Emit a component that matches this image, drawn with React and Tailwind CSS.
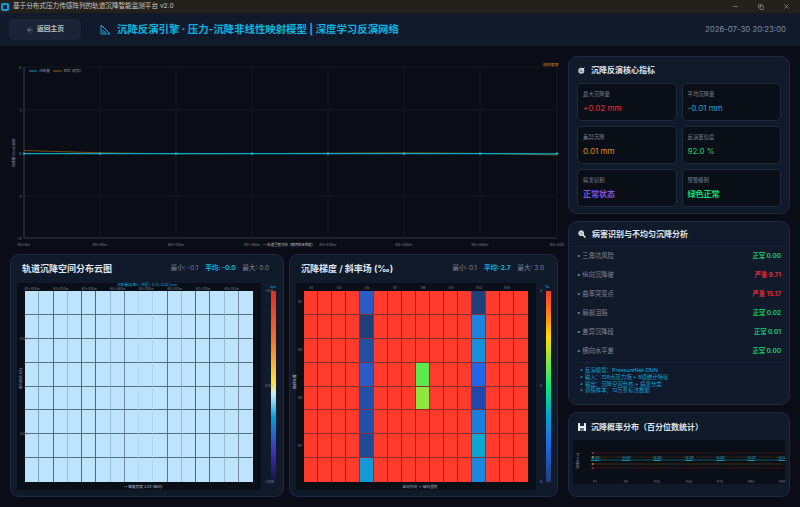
import { Minus, X, ArrowLeft, Copy } from "lucide-react";

const metrics = [
  { label: "最大沉降量", value: "+0.02 mm", color: "text-[#e5303a]" },
  { label: "平均沉降量", value: "-0.01 mm", color: "text-[#0aa5dc]" },
  { label: "差异沉降", value: "0.01 mm", color: "text-[#e08a0a]" },
  { label: "反演置信度", value: "92.0 %", color: "text-[#10d07a]" },
  { label: "病害识别", value: "正常状态", color: "text-[#8052e6] font-bold" },
  { label: "预警级别", value: "绿色正常", color: "text-[#10e07a] font-bold" },
];

const risks = [
  { name: "三角坑风险", value: "正常 0.00", color: "text-[#10c86e]" },
  { name: "纵向沉降坡", value: "严重 9.71", color: "text-[#d8303a]" },
  { name: "曲率突变点", value: "严重 15.17", color: "text-[#d8303a]" },
  { name: "局部沮陷", value: "正常 0.02", color: "text-[#10c86e]" },
  { name: "差异沉降段", value: "正常 0.01", color: "text-[#10c86e]" },
  { name: "横向水平差", value: "正常 0.00", color: "text-[#10c86e]" },
];

const notes = [
  "反演模型：PressureNet-DNN",
  "输入：128点压力场 + 8项统计特征",
  "输出：沉降空间分布 + 病害分类",
  "训练样本：12万条标注数据",
];

// vertical line strength of the cloud map, one per column
const cloudLines = [
  "border-[#7d9db3]", "border-[#4f6a7e]", "border-[#97bcd3]", "border-[#4f6a7e]",
  "border-[#4f6a7e]", "border-[#97bcd3]", "border-[#6d8ca2]", "border-[#b0d6ee]",
  "border-[#b0d6ee]", "border-[#5a788d]", "border-[#97bcd3]", "border-[#4f6a7e]",
  "border-[#4f6a7e]", "border-[#97bcd3]", "border-[#6d8ca2]", "border-transparent",
];

const col5 = ["bg-[#2a5cc8]", "bg-[#1f3f78]", "bg-[#2150a0]", "bg-[#2a5cc8]", "bg-[#2150a8]", "bg-[#2150a8]", "bg-[#1f4a96]", "bg-[#129ad8]"];
const col13 = ["bg-[#1f3f78]", "bg-[#1a84e0]", "bg-[#1690dd]", "bg-[#2068e8]", "bg-[#2048a8]", "bg-[#1a80e0]", "bg-[#08a8d0]", "bg-[#1a88e0]"];

function slopeColor(row, col) {
  if (col === 4) return col5[row];
  if (col === 12) return col13[row];
  if (col === 8 && row === 3) return "bg-[#5ee850]";
  if (col === 8 && row === 4) return "bg-[#8fe63c]";
  return "bg-[#ff3b2e]";
}

const cells = Array.from({ length: 128 }, (_, i) => ({ row: Math.floor(i / 16), col: i % 16 }));

function Panel({ className, children }) {
  return <div className={`rounded-[9px] border border-[#1d2a40] bg-[#111a2b] ${className}`}>{children}</div>;
}

function WindowIcon() {
  return <div className="ml-[1px] mr-[4px] h-[8px] w-[8px] rounded-[2px] border-2 border-[#0a9be8] bg-[#14202c]" />;
}

function RulerIcon() {
  return (
    <svg width="11" height="11" viewBox="0 0 11 11" fill="none" stroke="#0aa8e0" strokeWidth="1">
      <path d="M1 1 L10 10 L1 10 Z" />
      <path d="M3 6 L5.5 8.5 L3 8.5 Z" strokeWidth="0.7" />
    </svg>
  );
}

function TargetIcon() {
  return (
    <svg width="7" height="7" viewBox="0 0 7 7">
      <circle cx="3.3" cy="3.8" r="3" fill="#c8ced8" />
      <circle cx="3.3" cy="3.8" r="1.6" fill="#7d8798" />
      <path d="M3.3 3.8 L6.5 0.6" stroke="#e8ecf2" strokeWidth="1" />
    </svg>
  );
}

function SearchIcon() {
  return (
    <svg width="8" height="8" viewBox="0 0 8 8" fill="none">
      <circle cx="3.2" cy="3.2" r="2.4" fill="#aeb8c6" stroke="#f0f3f7" strokeWidth="1" />
      <path d="M5 5 L7.4 7.4" stroke="#f0f3f7" strokeWidth="1.4" />
    </svg>
  );
}

function SaveIcon() {
  return (
    <svg width="8" height="8" viewBox="0 0 8 8">
      <rect width="8" height="8" rx="0.6" fill="#e8ecf2" />
      <rect x="2" y="0" width="4" height="3" fill="#1c2636" />
      <rect x="2" y="5" width="4" height="3" fill="#6a7484" />
    </svg>
  );
}

function TopChart() {
  const xs = [24, 100, 176, 252, 328, 404, 480, 557];
  const xLabels = ["K0+0m", "K0+60m", "K0+120m", "K0+180m", "K0+240m", "K0+300m", "K0+360m", "K0+420"];
  const ys = [
    [67, "2"],
    [110, "1"],
    [153, "0"],
    [196, "-1"],
    [238, "-2"],
  ];
  return (
    <svg className="block" width="568" height="204" viewBox="0 46 568 204" fontFamily="Inter, 'Noto Sans CJK SC', sans-serif">
      {ys.map(([y, t]) => (
        <g key={t}>
          <line x1="24" x2="557" y1={y} y2={y} stroke="#151c2a" strokeWidth="0.7" />
          <text x="21.5" y={y + 1.5} fontSize="4" fill="#7d8798" textAnchor="end">{t}</text>
        </g>
      ))}
      {xs.map((x, i) => (
        <g key={x}>
          <line x1={x} x2={x} y1="67" y2="238" stroke="#151c2a" strokeWidth="0.7" />
          <text x={x} y="246" fontSize="3.6" fill="#7d8798" textAnchor="middle">{xLabels[i]}</text>
        </g>
      ))}
      <line x1="24" x2="24" y1="67" y2="238" stroke="#2c3443" strokeWidth="1.2" />
      <line x1="24" x2="557" y1="238" y2="238" stroke="#2c3443" strokeWidth="1.2" />
      <path d="M24 150.5 L100 152.8 L176 153.8 L252 153.6 L328 153.2 L404 152.8 L480 153.4 L557 155" fill="none" stroke="#7a4a0a" strokeWidth="1" />
      <path d="M24 153.7 L100 153.6 L176 153.7 L252 153.6 L328 153.6 L404 153.7 L480 153.6 L557 153.8" fill="none" stroke="#0aa8c8" strokeWidth="1.2" />
      {xs.map((x) => (
        <rect key={x} x={x - 0.9} y="152.6" width="1.8" height="2" fill="#0ac8f0" />
      ))}
      <line x1="29" x2="37" y1="71" y2="71" stroke="#08a4c8" strokeWidth="0.9" />
      <text x="39" y="72.4" fontSize="3.6" fill="#8d96a5">沉降量</text>
      <line x1="53" x2="62" y1="71" y2="71" stroke="#a8660a" strokeWidth="0.9" />
      <text x="63.5" y="72.4" fontSize="3.6" fill="#8d96a5">斜率 (趋势)</text>
      <text x="543" y="66.3" fontSize="3.8" fill="#e08a0a">现在健康</text>
      <text x="263" y="246.3" fontSize="3.4" fill="#c3cad6">— 轨道里程方向（随内锁具构造）</text>
      <text transform="translate(15 153) rotate(-90)" fontSize="3.6" fill="#8d96a5" textAnchor="middle">沉降量 (mm) 曲线</text>
    </svg>
  );
}

function PercentileChart() {
  const xs = [595, 626, 657, 689, 720, 751, 782];
  const labels = ["P1", "P5", "P25", "P50", "P75", "P95", "P99"];
  const lines = [
    [453, "#5a1c22"],
    [457, "#4a3a14"],
    [460, "#0c6e78"],
    [464, "#6a4c10"],
    [468, "#5a1c22"],
  ];
  return (
    <svg className="mx-[4px] block" width="212" height="44" viewBox="573 440 212 44" fontFamily="Inter, 'Noto Sans CJK SC', sans-serif">
      <rect x="573" y="440" width="212" height="44" fill="#0a0e17" />
      {lines.map(([y, c]) => (
        <line key={y} x1="591" x2="783" y1={y} y2={y} stroke={c} strokeWidth="0.8" strokeDasharray={y === 460 ? undefined : "1.5 0.6"} />
      ))}
      {[453, 457, 464, 468].map((y) => (
        <rect key={y} x="592" y={y - 1} width="1.6" height="2" fill={y === 453 || y === 468 ? "#a02828" : "#a07414"} />
      ))}
      {xs.map((x, i) => (
        <g key={x}>
          <text x={x} y="459.4" fontSize="3.8" fill="#18b8d8" textAnchor="middle">{i < 5 ? "-0.02" : "-0.01"}</text>
          <rect x={x - 3.8} y="460" width="7.6" height="1" fill="#0a90a8" />
          <text x={x} y="483" fontSize="3.6" fill="#6f7888" textAnchor="middle">{labels[i]}</text>
        </g>
      ))}
      <text transform="translate(579 461) rotate(-90)" fontSize="3.6" fill="#8d96a5" textAnchor="middle">沉降(mm)</text>
    </svg>
  );
}

function Stats({ min, avg, max }) {
  return (
    <div className="flex gap-[7px] text-[6.5px] text-[#7d8798]">
      <span>最小: {min}</span>
      <span className="font-bold text-[#0ab4e0]">平均: {avg}</span>
      <span>最大: {max}</span>
    </div>
  );
}

function CloudPanel() {
  const top = ["K0+000m", "K0+020m", "K0+040m", "K0+060m", "K0+080m", "K0+100m", "K0+120m", "K0+140m"];
  return (
    <Panel className="h-[243px] w-[274px]">
      <div className="flex h-[28px] items-center justify-between pl-[11px] pr-[14px]">
        <h2 className="text-[9px] font-bold text-[#dfe5ee]">轨道沉降空间分布云图</h2>
        <Stats min="-0.1" avg="-0.0" max="0.0" />
      </div>
      <div className="flex pl-[6px]">
        <div className="relative h-[207px] w-[244px] bg-[#0a0e17] pl-[8px] pt-[8px]">
          <div className="absolute left-[1px] top-[4px] grid w-[228px] grid-cols-8 text-center text-[3.2px] leading-[4px] text-[#7d8798]">
            {top.map((t) => <span key={t}>{t}</span>)}
          </div>
          <div className="absolute left-[100px] top-0 text-[3.6px] leading-[4px] text-[#0ab4e0]">沉降量(云图) / 范围 [-0.10, 0.02] mm</div>
          <div className="absolute left-[3px] top-[54px] text-[3.5px] text-[#7d8798]">5.00</div>
          <div className="absolute left-[3px] top-[149px] text-[3.5px] text-[#7d8798]">0.00</div>
          <div className="absolute left-[-6px] top-[93px] -rotate-90 text-[3.6px] text-[#8d96a5]">横向距离 (轨)</div>
          <div className="grid h-[191px] w-[228px] grid-cols-16 grid-rows-8 bg-[#bde4fc]">
            {cells.map(({ row, col }) => (
              <div key={`${row}-${col}`} className={`border-r ${cloudLines[col]} ${row < 7 ? "border-b border-b-[#55707f]" : ""}`} />
            ))}
          </div>
          <div className="mt-[2px] text-center text-[3.7px] text-[#aab2c0]">— 截面宽度 3.0x (轴向)</div>
        </div>
        <div className="relative pl-[10px] pt-[8px]">
          <div className="absolute left-[9px] top-[2px] text-[3.4px] text-[#0ab4e0]">mm</div>
          <div className="absolute left-[4px] top-[6px] text-[3px] text-[#8d96a5]">+0.02</div>
          <div className="absolute left-[4px] top-[101px] text-[3px] text-[#8d96a5]">0.010</div>
          <div className="absolute left-[4px] top-[197px] text-[3px] text-[#8d96a5]">-0.128</div>
          <div className="h-[191px] w-[5px] bg-[linear-gradient(to_bottom,#e02c28,#f07030_25%,#ffe040_48%,#c8ecfa_54%,#00a0e0_66%,#4030b8_84%,#1a1040)]" />
        </div>
      </div>
    </Panel>
  );
}

function SlopePanel() {
  const top = ["S1", "S3", "S5", "S7", "S9", "S11", "S13", "S15"];
  const left = ["R1", "R3", "R5", "R7"];
  return (
    <Panel className="h-[243px] w-[269px]">
      <div className="flex h-[28px] items-center justify-between pl-[11px] pr-[13px]">
        <h2 className="text-[9px] font-bold text-[#dfe5ee]">沉降梯度 / 斜率场 (‰)</h2>
        <Stats min="0.1" avg="2.7" max="3.0" />
      </div>
      <div className="flex pl-[6px]">
        <div className="relative h-[207px] w-[240px] bg-[#0a0e17] pl-[8px] pt-[8px]">
          <div className="absolute left-[1px] top-[3px] grid w-[224px] grid-cols-8 text-center text-[3.5px] leading-[5px] text-[#7d8798]">
            {top.map((t) => <span key={t}>{t}</span>)}
          </div>
          <div className="absolute left-[2px] top-[8px] grid h-[191px] grid-rows-4 text-[3.5px] text-[#7d8798]">
            {left.map((t) => <span key={t} className="flex h-[24px] items-center">{t}</span>)}
          </div>
          <div className="absolute left-[-7px] top-[96px] -rotate-90 text-[3.6px] text-[#c3cad6]">横向位置</div>
          <div className="grid h-[191px] w-[224px] grid-cols-16 grid-rows-8">
            {cells.map(({ row, col }) => (
              <div
                key={`${row}-${col}`}
                className={`${slopeColor(row, col)} ${col < 15 ? "border-r border-r-[#8a2f2c]" : ""} ${row < 7 ? "border-b border-b-[#8a2f2c]" : ""}`}
              />
            ))}
          </div>
          <div className="mt-[2px] text-center text-[3.7px] text-[#aab2c0]">纵向方向 → 轴向里程</div>
        </div>
        <div className="relative pl-[10px] pt-[8px]">
          <div className="absolute left-[9px] top-[2px] text-[3.6px] text-[#0ab4e0]">‰</div>
          <div className="absolute left-[4px] top-[6px] text-[3.5px] text-[#8d96a5]">3</div>
          <div className="absolute left-[4px] top-[101px] text-[3.5px] text-[#8d96a5]">2</div>
          <div className="absolute left-[4px] top-[197px] text-[3.5px] text-[#8d96a5]">0</div>
          <div className="h-[191px] w-[5px] bg-[linear-gradient(to_bottom,#ff3b2e,#ff8c10_14%,#ffdc00_24%,#8fe63c_36%,#10e878_50%,#08a8c8_64%,#2068e8_80%,#1f3f78)]" />
        </div>
      </div>
    </Panel>
  );
}

export default function App() {
  return (
    <div className="flex h-[507px] w-[800px] flex-col overflow-hidden bg-[#0a0d15] font-['Inter','Noto_Sans_CJK_SC',sans-serif]">
      {/* title bar */}
      <div className="flex h-[13px] items-center bg-[#24211c] text-[6.6px] text-[#c9c9c6]">
        <WindowIcon />
        <span>基于分布式压力传感阵列的轨道沉降智能监测平台 v2.0</span>
        <div className="ml-auto flex items-center gap-[19px] pr-[10px] text-[#d8d8d4]">
          <Minus size={7} strokeWidth={1.5} />
          <Copy size={6} strokeWidth={1.6} />
          <X size={7} strokeWidth={1.5} />
        </div>
      </div>

      {/* header */}
      <header className="flex h-[33px] items-center bg-[#111a2b] pl-[9px] pr-[14px]">
        <button className="flex h-[21px] w-[72px] items-center justify-center gap-[3px] rounded-[5px] bg-[#1a2436] text-[6.8px] font-bold text-[#b8c0cc]">
          <ArrowLeft size={8} strokeWidth={1.5} />
          返回主页
        </button>
        <div className="ml-[19px]"><RulerIcon /></div>
        <h1 className="ml-[6px] whitespace-nowrap text-[10.4px] font-bold text-[#0ab4e0]">沉降反演引擎 · 压力-沉降非线性映射模型 | 深度学习反演网络</h1>
        <span className="ml-auto text-[7.8px] text-[#7f8ba0]">2026-07-30 20:23:00</span>
      </header>

      <main className="flex flex-1">
        <div className="flex w-[568px] flex-col">
          <TopChart />
          <div className="mt-[4px] flex gap-[5px] pl-[10px]">
            <CloudPanel />
            <SlopePanel />
          </div>
        </div>

        <div className="flex w-[222px] flex-col gap-[7px] pt-[10px]">
          <Panel className="h-[158px] px-[8px]">
            <div className="flex h-[26px] items-center gap-[5px] pl-[1px]">
              <TargetIcon />
              <h3 className="ml-[1px] text-[8px] font-bold text-[#dfe5ee]">沉降反演核心指标</h3>
            </div>
            <div className="grid grid-cols-2 gap-x-[5px] gap-y-[5px]">
              {metrics.map((m) => (
                <div key={m.label} className="flex h-[38px] flex-col gap-[4px] rounded-[5px] border border-[#1d2a40] bg-[#0a0e17] pl-[5px] pt-[6px]">
                  <span className="text-[5.4px] leading-[8px] text-[#7d8798]">{m.label}</span>
                  <span className={`text-[8px] leading-[12px] ${m.color}`}>{m.value}</span>
                </div>
              ))}
            </div>
          </Panel>

          <Panel className="h-[184px] px-[3px]">
            <div className="flex h-[25px] items-center gap-[6px] border-b border-b-[#182336] pl-[6px]">
              <SearchIcon />
              <h3 className="text-[8px] font-bold text-[#dfe5ee]">病害识别与不均匀沉降分析</h3>
            </div>
            <ul className="border-b border-b-[#182336] px-[5px] pb-[1px]">
              {risks.map((r) => (
                <li key={r.name} className="flex h-[19px] items-center justify-between text-[6.3px]">
                  <span className="text-[#7d8798]">• {r.name}</span>
                  <span className={`font-bold ${r.color}`}>{r.value}</span>
                </li>
              ))}
            </ul>
            <ul className="pl-[8px] pt-[4px]">
              {notes.map((n) => (
                <li key={n} className="flex h-[6.7px] items-center text-[5.4px] text-[#0aa8d8]">
                  <span className="mr-[2px]">•</span>
                  {n}
                </li>
              ))}
            </ul>
          </Panel>

          <Panel className="h-[85px]">
            <div className="flex h-[27px] items-center gap-[5px] pl-[9px]">
              <SaveIcon />
              <h3 className="text-[8px] font-bold text-[#dfe5ee]">沉降概率分布（百分位数统计）</h3>
            </div>
            <PercentileChart />
          </Panel>
        </div>
      </main>
    </div>
  );
}
